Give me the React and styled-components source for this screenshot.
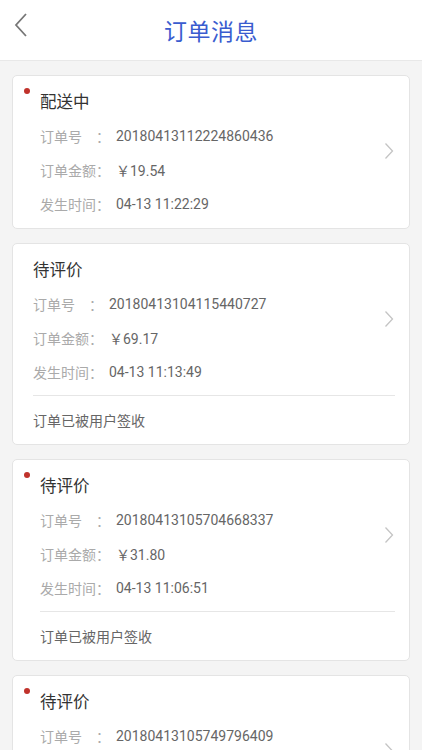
import React, { Fragment } from 'react';
import styled, { createGlobalStyle } from 'styled-components';

const GlobalStyle = createGlobalStyle`
  html, body {
    margin: 0;
    padding: 0;
    background: #f4f4f4;
    font-family: Roboto, "Noto Sans CJK SC", sans-serif;
  }
`;

const Page = styled.div`
  width: 422px;
  height: 750px;
  overflow: hidden;
  background: #f4f4f4;
`;

const Header = styled.div`
  position: relative;
  display: flex;
  align-items: center;
  justify-content: center;
  height: 60px;
  background: #fff;
  border-bottom: 1px solid #e8e8e8;
`;

const BackButton = styled.div`
  position: absolute;
  left: 13px;
  top: 12px;
  width: 16px;
  height: 26px;
`;

const Title = styled.div`
  color: #3a5ccf;
  font-size: 23px;
  font-family: "Noto Sans CJK SC", sans-serif;
  letter-spacing: 0.5px;
`;

const List = styled.div`
  display: flex;
  flex-direction: column;
  gap: 14px;
  padding: 14px 12px;
`;

const Card = styled.div`
  position: relative;
  background: #fff;
  border: 1px solid #e4e4e4;
  border-radius: 5px;
`;

const Dot = styled.span`
  position: absolute;
  left: 11px;
  top: 12px;
  width: 6px;
  height: 6px;
  border-radius: 50%;
  background: #c0322b;
`;

const Main = styled.div`
  display: flex;
  align-items: center;
  padding: 13px 15px ${p => (p.hasFooter ? 6 : 7)}px ${p => (p.unread ? 27 : 20)}px;
`;

const Info = styled.div`
  flex: 1;
`;

const Status = styled.div`
  font-family: "Noto Sans CJK SC", sans-serif;
  font-size: 16.5px;
  line-height: 24px;
  color: #333;
  margin-bottom: 6px;
`;

const Row = styled.div`
  display: flex;
  align-items: center;
  height: 34px;
  font-size: 14px;
`;

const Label = styled.span`
  width: 76px;
  color: #aaa;
  font-family: "Noto Sans CJK SC", sans-serif;
`;

const LabelName = styled.span`
  display: inline-block;
  width: 56px;
`;

const Value = styled.span`
  color: #666;
`;

const Footer = styled.div`
  margin: 0 14px 0 ${p => (p.unread ? 27 : 20)}px;
  border-top: 1px solid #e6e6e6;
  height: 48px;
  display: flex;
  align-items: center;
  font-size: 14px;
  color: #666;
  font-family: "Noto Sans CJK SC", sans-serif;
`;

const ChevronIcon = styled.svg`
  margin-bottom: 8px;
`;

const Chevron = () => (
  <ChevronIcon width="10" height="18" viewBox="0 0 10 18">
    <path d="M1.5 1.5 L8.5 9 L1.5 16.5" fill="none" stroke="#c4c4c4" strokeWidth="1.3" />
  </ChevronIcon>
);

const orders = [
  { id: '20180413112224860436', status: '配送中', amount: '19.54', time: '04-13 11:22:29', unread: true },
  { id: '20180413104115440727', status: '待评价', amount: '69.17', time: '04-13 11:13:49', note: '订单已被用户签收' },
  { id: '20180413105704668337', status: '待评价', amount: '31.80', time: '04-13 11:06:51', note: '订单已被用户签收', unread: true },
  { id: '20180413105749796409', status: '待评价', amount: '25.60', time: '04-13 11:02:17', note: '订单已被用户签收', unread: true },
];

const Field = ({ name, children }) => (
  <Row>
    <Label><LabelName>{name}</LabelName>：</Label>
    <Value>{children}</Value>
  </Row>
);

const App = () => (
  <Fragment>
    <GlobalStyle />
    <Page>
      <Header>
        <BackButton>
          <svg width="16" height="26" viewBox="0 0 16 26">
            <path d="M13 2 L3 13 L13 24" fill="none" stroke="#777" strokeWidth="1.8" />
          </svg>
        </BackButton>
        <Title>订单消息</Title>
      </Header>
      <List>
        {orders.map(order => (
          <Card key={order.id}>
            {order.unread && <Dot />}
            <Main unread={order.unread} hasFooter={!!order.note}>
              <Info>
                <Status>{order.status}</Status>
                <Field name="订单号">{order.id}</Field>
                <Field name="订单金额">￥{order.amount}</Field>
                <Field name="发生时间">{order.time}</Field>
              </Info>
              <Chevron />
            </Main>
            {order.note && <Footer unread={order.unread}>{order.note}</Footer>}
          </Card>
        ))}
      </List>
    </Page>
  </Fragment>
);

export default App;
